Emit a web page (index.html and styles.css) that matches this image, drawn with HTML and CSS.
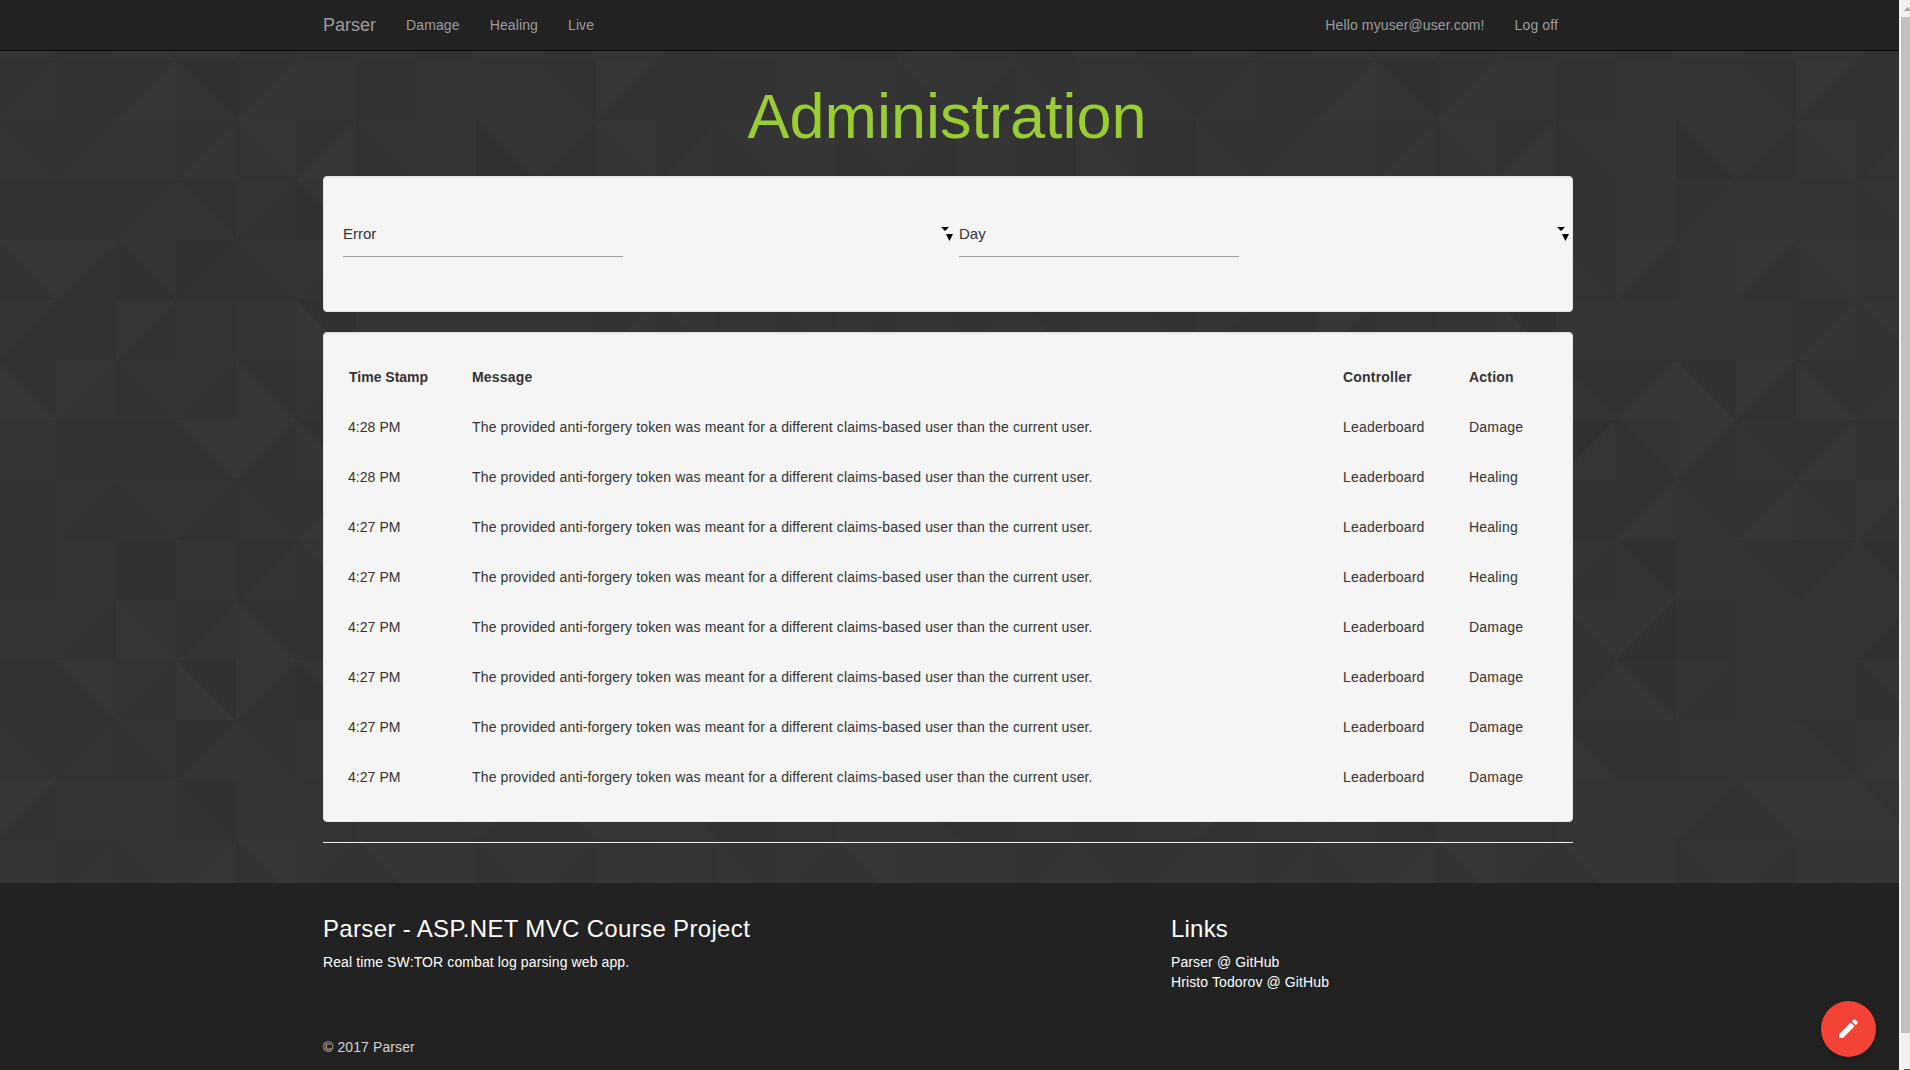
FILE: index.html
```html
<!DOCTYPE html>
<html lang="en">
<head>
<meta charset="utf-8">
<title>Administration - Parser</title>
<link rel="stylesheet" href="styles.css">
</head>
<body>
<svg class="backdrop" id="backdrop" width="1899" height="1070" shape-rendering="crispEdges" aria-hidden="true"></svg>
<div class="page">
  <nav class="navbar">
    <div class="container navbar-inner">
      <a class="brand">Parser</a>
      <a class="nav-link">Damage</a>
      <a class="nav-link">Healing</a>
      <a class="nav-link">Live</a>
      <a class="nav-link nav-user">Hello myuser@user.com!</a>
      <a class="nav-link">Log off</a>
    </div>
  </nav>
  <main class="container main">
    <h1 class="title">Administration</h1>
    <section class="well filters">
      <div class="select"><span class="select-value">Error</span><span class="carets"><svg class="caret-a" width="8" height="4"><path d="M0 0H8L4 4Z"/></svg><svg class="caret-b" width="7" height="7"><path d="M0 0H7L3.5 7Z"/></svg></span></div>
      <div class="select"><span class="select-value">Day</span><span class="carets"><svg class="caret-a" width="8" height="4"><path d="M0 0H8L4 4Z"/></svg><svg class="caret-b" width="7" height="7"><path d="M0 0H7L3.5 7Z"/></svg></span></div>
    </section>
    <section class="well log">
      <table class="log-table">
        <thead><tr><th class="col-time">Time Stamp</th><th class="col-message">Message</th><th class="col-controller">Controller</th><th>Action</th></tr></thead>
        <tbody>
          <tr><td>4:28 PM</td><td>The provided anti-forgery token was meant for a different claims-based user than the current user.</td><td>Leaderboard</td><td>Damage</td></tr>
          <tr><td>4:28 PM</td><td>The provided anti-forgery token was meant for a different claims-based user than the current user.</td><td>Leaderboard</td><td>Healing</td></tr>
          <tr><td>4:27 PM</td><td>The provided anti-forgery token was meant for a different claims-based user than the current user.</td><td>Leaderboard</td><td>Healing</td></tr>
          <tr><td>4:27 PM</td><td>The provided anti-forgery token was meant for a different claims-based user than the current user.</td><td>Leaderboard</td><td>Healing</td></tr>
          <tr><td>4:27 PM</td><td>The provided anti-forgery token was meant for a different claims-based user than the current user.</td><td>Leaderboard</td><td>Damage</td></tr>
          <tr><td>4:27 PM</td><td>The provided anti-forgery token was meant for a different claims-based user than the current user.</td><td>Leaderboard</td><td>Damage</td></tr>
          <tr><td>4:27 PM</td><td>The provided anti-forgery token was meant for a different claims-based user than the current user.</td><td>Leaderboard</td><td>Damage</td></tr>
          <tr><td>4:27 PM</td><td>The provided anti-forgery token was meant for a different claims-based user than the current user.</td><td>Leaderboard</td><td>Damage</td></tr>
        </tbody>
      </table>
    </section>
    <hr class="rule">
  </main>
  <footer class="footer">
    <div class="container footer-grid">
      <div>
        <h5 class="footer-title">Parser - ASP.NET MVC Course Project</h5>
        <p class="footer-text">Real time SW:TOR combat log parsing web app.</p>
      </div>
      <div>
        <h5 class="footer-title footer-title-links">Links</h5>
        <a class="footer-text">Parser @ GitHub</a>
        <a class="footer-text">Hristo Todorov @ GitHub</a>
      </div>
    </div>
    <div class="container copyright">© 2017 Parser</div>
  </footer>
</div>
<button class="fab" aria-label="Edit"><svg width="25" height="25" viewBox="0 0 24 24"><path fill="#fff" d="M3 17.25V21h3.75L17.81 9.94l-3.75-3.75L3 17.25zM20.71 7.04a.996.996 0 0 0 0-1.41l-2.34-2.34a.996.996 0 0 0-1.41 0l-1.83 1.83 3.75 3.75 1.83-1.83z"/></svg></button>
<div class="scrollbar"><i class="scroll-up"></i><i class="scroll-thumb"></i><i class="scroll-down"></i></div>
<script src="backdrop.js"></script>
</body>
</html>
```
FILE: styles.css
```css
* { box-sizing: border-box; }
html, body { margin: 0; height: 1070px; overflow: hidden; }
body {
  background: #343434;
  color: #333;
  font: 14px/20px "Liberation Sans", Arial, sans-serif;
}
.backdrop { position: absolute; left: 0; top: 0; }
.page { position: relative; width: 1899px; height: 1070px; display: flex; flex-direction: column; }
.container { width: 1250px; margin-left: 323px; }
.navbar { height: 51px; flex: none; background: #222; border-bottom: 1px solid #080808; color: #9d9d9d; }
.navbar-inner { display: flex; align-items: center; height: 50px; padding-right: 15px; }
.brand { font-size: 18px; margin-right: 30px; }
.nav-link { margin-right: 30px; letter-spacing: .12px; }
.nav-link:last-child { margin-right: 0; }
.nav-user { margin-left: auto; }
.main { height: 832px; flex: none; }
.title { margin: 0; height: 125px; padding: 31px 2px 0 0; color: #9acd32; font-size: 63px; font-weight: 400; line-height: 69px; text-align: center; }
.well { background: #f5f5f5; border: 1px solid #e3e3e3; border-radius: 4px; box-shadow: inset 0 1px 1px rgba(0,0,0,.05); margin-bottom: 20px; }
.filters { height: 136px; display: flex; padding: 33px 0 0 19px; }
.select { width: 616px; flex: none; display: flex; justify-content: space-between; }
.select-value { width: 280px; height: 47px; padding-top: 1px; line-height: 46px; border-bottom: 1px solid #9e9e9e; font-size: 15px; }
.carets { width: 12px; height: 14px; margin: 17px 6px 0 0; display: flex; flex-direction: column; justify-content: space-between; }
.caret-b { align-self: flex-end; }
.log { height: 490px; padding: 19px 19px; }
.log-table { width: 100%; table-layout: fixed; border-collapse: collapse; }
.log-table th, .log-table td { height: 50px; padding: 0 5px; text-align: left; letter-spacing: .2px; }
.log-table td:nth-child(2) { letter-spacing: .15px; }
.log-table td:first-child { letter-spacing: .05px; }
.log-table .col-time { padding-left: 6px; letter-spacing: 0; }
.col-time { width: 124px; }
.col-message { width: 871px; }
.col-controller { width: 126px; }
.rule { margin: 0; border: 0; border-top: 1px solid #eee; }
.footer { flex: 1; background: #222; color: #fff; padding-top: 32px; display: flex; flex-direction: column; }
.footer-grid { display: grid; grid-template-columns: 848px 1fr; height: 122px; }
.footer-title { margin: 0 0 9px; font-size: 24px; line-height: 28px; font-weight: 400; letter-spacing: .34px; }
.footer-title-links { letter-spacing: .2px; }
.footer-text { display: block; margin: 0; letter-spacing: .11px; }
.copyright { color: #d3d3d3; letter-spacing: .1px; }
.fab { position: absolute; left: 1821px; top: 1001px; width: 55px; height: 56px; border: 0; padding: 0 0 2px; border-radius: 50%; background: #f44336; box-shadow: 0 2px 5px rgba(0,0,0,.3); display: flex; align-items: center; justify-content: center; }
.scrollbar { position: absolute; left: 1899px; top: 0; width: 11px; height: 1070px; overflow: hidden; background: #f1f1f1; display: flex; flex-direction: column; padding-left: 2px; }
.scroll-up { flex: none; width: 7px; height: 4px; margin: 7px 0 6px 3px; background: #a3a3a3; clip-path: polygon(50% 0, 100% 100%, 0 100%); }
.scroll-thumb { flex: none; height: 1016px; background: #c1c1c1; }
.scroll-down { flex: none; height: 1px; margin: 36px 0 0 3px; background: #505050; }
```
FILE: backdrop.js
```js
// Each cell is a 60px square cut along a diagonal; the two digits are the
// grey levels of its left and right triangles. Twenty columns repeat.
const rows = [
  "52 33 52 55 32 44 44 33 55 53 55 53 44 44 33 35 44 33 55 33",
  "35 32 36 41 25 45 33 44 44 42 62 33 33 44 44 25 52 53 44 42",
  "53 35 55 25 46 26 35 45 15 52 56 24 35 55 35 42 55 32 65 32",
  "33 33 34 52 53 15 33 45 34 54 44 35 44 44 44 44 44 44 44 44",
  "36 63 14 13 34 53 42 62 45 62 46 44 44 44 44 44 44 44 44 44",
  "52 33 63 54 54 61 54 54 45 44 25 25 44 34 53 44 35 52 44 53",
  "62 65 34 43 62 43 52 26 61 62 62 35 44 44 44 44 44 44 44 44",
  "45 23 22 26 62 51 16 24 62 43 26 23 44 44 44 44 44 44 44 44",
  "33 43 35 42 42 36 22 26 43 36 53 63 44 44 44 44 44 44 44 44",
  "33 44 11 55 24 25 53 41 45 53 24 41 44 44 44 44 44 44 44 44",
  "45 42 65 24 62 22 25 50 32 44 44 41 44 44 44 44 44 44 44 44",
  "32 26 42 61 63 15 24 51 42 54 45 14 44 44 44 44 44 44 44 44",
  "43 34 35 14 43 45 63 23 44 45 52 46 44 44 44 44 44 44 44 44",
  "62 45 54 21 44 44 55 45 52 36 66 64 33 44 55 52 33 44 33 44",
  "45 34 35 46 36 43 25 55 35 53 54 54 53 43 36 54 44 35 53 34"
].map(r => r.split(" "));
let out = "";
rows.forEach((row, r) => {
  for (let c = 0; c < 32; c++) {
    const x = c * 60 - 4, y = r * 60, X = x + 60, Y = y + 60;
    const shade = d => { const v = 48 + Number(d); return `rgb(${v},${v},${v})`; };
    const [a, b] = row[c % 20];
    out += `<rect x="${x}" y="${y}" width="60" height="60" fill="${shade(a)}"/>`;
    const pts = (r + c) % 2 ? `${X},${y} ${X},${Y} ${x},${Y}` : `${x},${y} ${X},${y} ${X},${Y}`;
    out += `<polygon points="${pts}" fill="${shade(b)}"/>`;
  }
});
document.getElementById("backdrop").innerHTML = out;
```
